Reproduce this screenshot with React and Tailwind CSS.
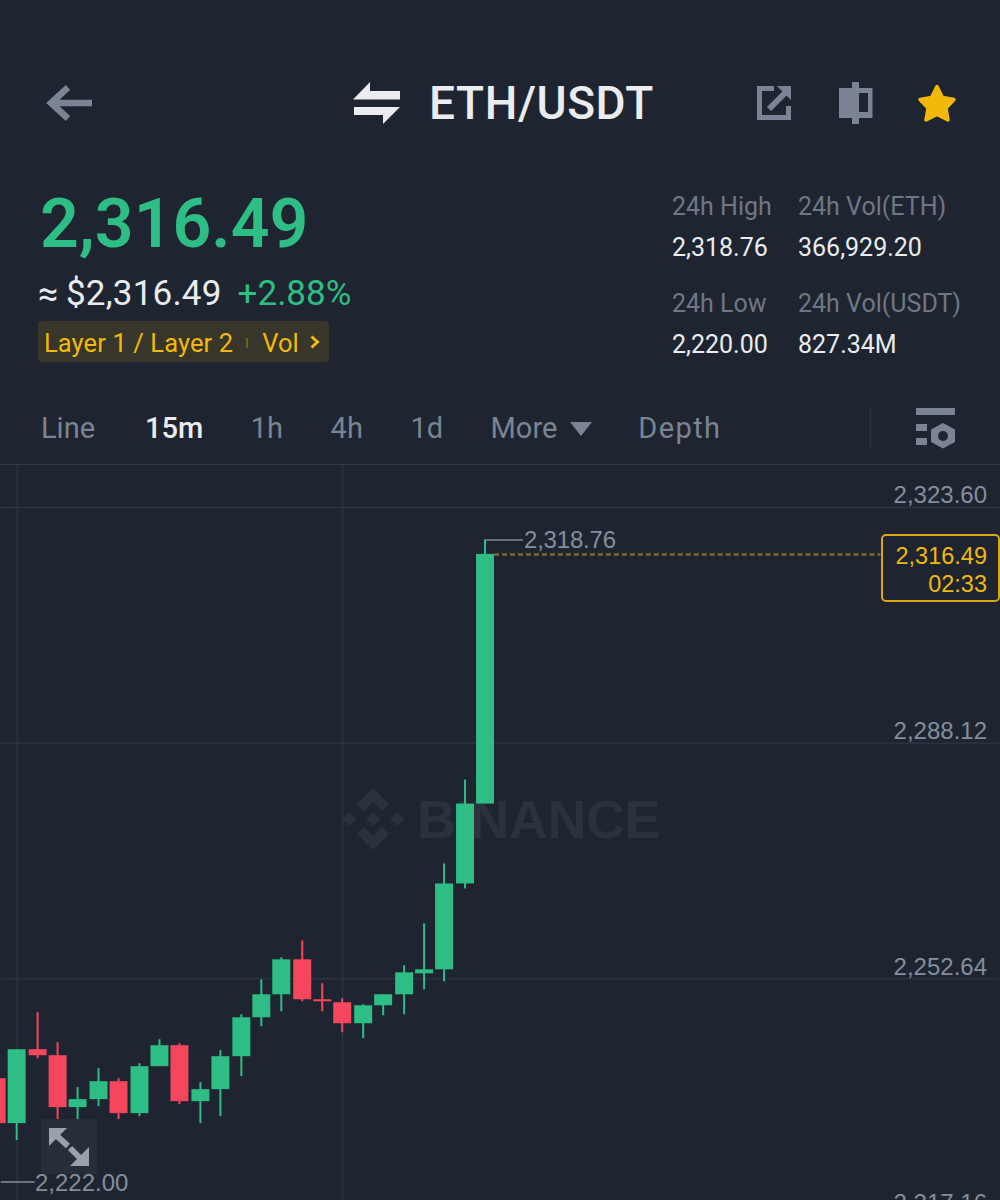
import React from 'react';

const GREEN = '#2ebd85';
const RED = '#f6465d';

// x, high, top of body, bottom of body, low, up?
const candles = [
  [-4, 1077, 1078, 1123, 1128, false],
  [16, 1049, 1049, 1123, 1140, true],
  [37, 1012, 1049, 1055, 1058, false],
  [57, 1042, 1055, 1107, 1119, false],
  [77, 1087, 1099, 1107, 1119, true],
  [98, 1068, 1081, 1099, 1106, true],
  [118, 1078, 1081, 1113, 1119, false],
  [139, 1063, 1066, 1113, 1116, true],
  [159, 1039, 1045, 1066, 1066, true],
  [179, 1043, 1045, 1101, 1104, false],
  [200, 1082, 1089, 1101, 1123, true],
  [220, 1050, 1056, 1089, 1116, true],
  [241, 1014, 1017, 1056, 1076, true],
  [261, 979, 994, 1017, 1026, true],
  [281, 957, 959, 994, 1011, true],
  [302, 940, 959, 999, 1001, false],
  [322, 983, 999, 1001, 1011, false],
  [342, 998, 1002, 1023, 1032, false],
  [363, 1004, 1005, 1023, 1038, true],
  [383, 994, 994, 1005, 1015, true],
  [404, 965, 972, 994, 1014, true],
  [424, 923, 969, 973, 989, true],
  [444, 863, 883, 969, 981, true],
  [465, 779, 803, 883, 888, true],
  [485, 539, 553, 803, 803, true],
];

const axisLabels = [
  { text: '2,323.60', top: 'top-[16px]' },
  { text: '2,288.12', top: 'top-[252px]' },
  { text: '2,252.64', top: 'top-[488px]' },
  { text: '2,217.16', top: 'top-[724px]' },
];

const tabs = ['Line', '15m', '1h', '4h', '1d'];

const Stat = ({ label, value }) => (
  <div>
    <div className="h-[36px] leading-[36px] text-[25px] text-[#6f7785]">{label}</div>
    <div className="h-[36px] mt-[5px] leading-[36px] text-[25px] text-[#eaecef]">{value}</div>
  </div>
);

const Chart = () => (
  <svg className="absolute inset-0 w-full h-full" viewBox="0 464 1000 736">
    <g fill="#333a45">
      <rect x="0" y="506" width="1000" height="1" />
      <rect x="0" y="742" width="1000" height="1" />
      <rect x="0" y="978" width="1000" height="1" />
      <rect x="16" y="464" width="1" height="736" />
      <rect x="342" y="464" width="1" height="736" />
    </g>
    <path d="M494 553.5H881" stroke="#7d6b2a" strokeWidth="2.5" strokeDasharray="5 3" />
    <path d="M485 553V539H523" fill="none" stroke="#7c8790" strokeWidth="1.5" />
    <path d="M0 1182H34" stroke="#848e9c" strokeWidth="1.5" />
    {candles.map(([x, high, top, bottom, low, up]) => (
      <g key={x} fill={up ? GREEN : RED}>
        <rect x={x - 1} y={high} width="2" height={low - high} />
        <rect x={x - 9} y={top} width="18" height={bottom - top} />
      </g>
    ))}
  </svg>
);

export default function App() {
  return (
    <div className="w-[1000px] h-[1200px] overflow-hidden flex flex-col bg-[#1e2530] font-['Roboto',sans-serif]">
      {/* top bar */}
      <div className="relative mt-[76px] h-[54px] shrink-0 flex items-center justify-between pl-[46px] pr-[43px]">
        <svg width="47" height="38" viewBox="46 84 47 38">
          <path d="M92 103H52M68 87.5L51 103L68 118.5" fill="none" stroke="#7a8494" strokeWidth="6.5" />
        </svg>
        <div className="absolute left-[353px] top-0 h-[54px] flex items-center gap-[28px]">
          <svg width="48" height="42" viewBox="353 82 48 42">
            <path d="M353 99.5L370 82V91H400V99.5ZM354 107H400L383 124V115H354Z" fill="#eaecef" />
          </svg>
          <span className="text-[46px] leading-[54px] font-medium text-[#eaecef] tracking-[0.6px]">ETH/USDT</span>
        </div>
        <div className="flex items-center">
          <svg width="36" height="36" viewBox="756 85 36 36">
            <path d="M774 88.5H759.5V117.5H788.5V106" fill="none" stroke="#7a8494" strokeWidth="5" />
            <path d="M769 109L785 93" fill="none" stroke="#7a8494" strokeWidth="6" />
            <path d="M777 86H791V100Z" fill="#7a8494" />
          </svg>
          <svg className="ml-[47px]" width="34" height="42" viewBox="839 82 34 42">
            <path
              fillRule="evenodd"
              d="M852 82H859V88H872.5V118H859V124H852V118H839V88H852ZM859 93V112H868V93Z"
              fill="#7a8494"
            />
          </svg>
          <svg className="ml-[44px]" width="40" height="40" viewBox="917 82 40 40">
            <path
              d="M937 85.5L942.5 96.5L954 98.5L946 107L948 119L937 113.5L926 119L928 107L920 98.5L931.5 96.5Z"
              fill="#f0b90b"
              stroke="#f0b90b"
              strokeWidth="3.5"
              strokeLinejoin="round"
            />
          </svg>
        </div>
      </div>

      {/* price + 24h stats */}
      <div className="mt-[58px] h-[174px] shrink-0 flex justify-between">
        <div className="pl-[38px]">
          <div className="h-[72px] pl-[2px] leading-[72px] text-[68px] font-semibold text-[#2ebd85]">2,316.49</div>
          <div className="mt-[16px] h-[36px] flex items-center text-[#eaecef] text-[35px] leading-[36px]">
            <span className="w-[28px] text-[36px]">≈</span>
            <span className="tracking-[0.2px]">$2,316.49</span>
            <span className="ml-[16px] text-[#2ebd85]">+2.88%</span>
          </div>
          <div className="mt-[9px] w-[291px] h-[41px] pl-[6px] pt-[3px] flex items-center rounded-[4px] bg-[#38352a] text-[#f0b90b] text-[25.5px] tracking-[0.1px]">
            <span>Layer 1 / Layer 2</span>
            <span className="ml-[13px] w-[2px] h-[10px] bg-[#6b5d25]" />
            <span className="ml-[14px]">Vol</span>
            <svg className="ml-[10px] -mt-[3px]" width="12" height="16" viewBox="0 0 12 16">
              <path d="M2.5 2.5L8.5 8L2.5 13.5" fill="none" stroke="#f0b90b" strokeWidth="3" />
            </svg>
          </div>
        </div>
        <div className="w-[328px] pt-[1px] grid grid-cols-[126px_1fr] gap-y-[20px] content-start">
          <Stat label="24h High" value="2,318.76" />
          <Stat label="24h Vol(ETH)" value="366,929.20" />
          <Stat label="24h Low" value="2,220.00" />
          <Stat label="24h Vol(USDT)" value="827.34M" />
        </div>
      </div>

      {/* interval tabs */}
      <div className="mt-[44px] h-[44px] shrink-0 flex items-center pl-[41px] pr-[44px] text-[29px] text-[#7a8494]">
        <div className="mt-[1px] flex items-center gap-[47.5px]">
          {tabs.map((tab) => (
            <span
              key={tab}
              className={tab === '15m' ? 'text-[#eaecef] font-medium' : tab === 'Line' ? 'mr-[2.5px]' : ''}
            >
              {tab}
            </span>
          ))}
          <span className="flex items-center gap-[13px]">
            More
            <svg width="22" height="14" viewBox="0 0 22 14">
              <path d="M0 0H22L11 14Z" fill="#7a8494" />
            </svg>
          </span>
        </div>
        <span className="mt-[1px] ml-[46px] tracking-[1.4px]">Depth</span>
        <div className="ml-auto h-[42px] w-[1px] bg-[#2d343e]" />
        <svg className="ml-[45px]" width="40" height="41" viewBox="916 407 40 41">
          <path d="M916 407H955V414H916ZM916 423H927V430H916ZM916 437H927V444H916Z" fill="#7a8494" />
          <path
            fillRule="evenodd"
            d="M943 422L955 428.5V441L943 447.5L931 441V428.5ZM943 430A5 5 0 1 0 943 440A5 5 0 1 0 943 430Z"
            fill="#7a8494"
          />
        </svg>
      </div>

      {/* chart */}
      <div className="relative mt-[14px] flex-1 border-t border-[#333a45] text-[24px] leading-[28px] font-['Liberation_Sans',sans-serif] text-[#848e9c]">
        {/* watermark */}
        <div className="absolute left-[341px] top-[322px] flex items-center gap-[12px] text-[#2b323c]">
          <svg width="64" height="64" viewBox="0 0 64 64">
            <path
              d="M32 1L48 17L41 24L32 15L23 24L16 17ZM8 25L15 32L8 39L1 32ZM56 25L63 32L56 39L49 32ZM32 25L39 32L32 39L25 32ZM23 40L32 49L41 40L48 47L32 63L16 47Z"
              fill="currentColor"
            />
          </svg>
          <span className="text-[54px] leading-[64px] font-bold tracking-[-0.4px]">BINANCE</span>
        </div>
        <Chart />
        {axisLabels.map((label) => (
          <div key={label.text} className={`absolute right-[13px] ${label.top}`}>{label.text}</div>
        ))}
        <div className="absolute left-[524px] top-[61px] tracking-[-0.2px]">2,318.76</div>
        <div className="absolute left-[35px] top-[704px]">2,222.00</div>
        {/* last price */}
        <div className="absolute left-[881px] right-0 top-[69px] h-[68px] pr-[11px] pt-[3px] flex flex-col justify-center items-end rounded-[5px] border-2 border-[#d9a80f] bg-[#1e2530] text-[23.5px] text-[#f0b90b]">
          <div>2,316.49</div>
          <div>02:33</div>
        </div>
        {/* fullscreen */}
        <div className="absolute left-[41px] top-[654px] w-[56px] h-[55px] flex items-center justify-center rounded-[2px] bg-[#282e39]">
          <svg width="42" height="42" viewBox="48 1125 42 42">
            <path d="M49 1127H67L49 1145Z" fill="#9aa1ac" />
            <path d="M57 1135L68 1145" stroke="#9aa1ac" strokeWidth="6" />
            <path d="M89 1165H70L89 1146Z" fill="#9aa1ac" />
            <path d="M80 1157L70 1147" stroke="#9aa1ac" strokeWidth="6" />
          </svg>
        </div>
      </div>
    </div>
  );
}
